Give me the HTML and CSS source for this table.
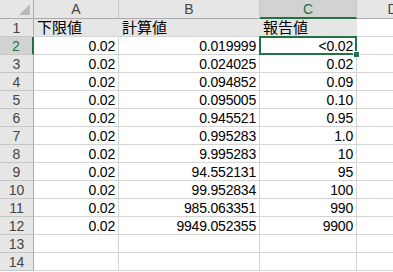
FILE: index.html
```html
<!DOCTYPE html>
<html lang="ja">
<head>
    <meta charset="UTF-8">
    <meta name="viewport" content="width=device-width, initial-scale=1.0">
    <title>報告値の丸め</title>
    <link rel="stylesheet" href="styles.css">
</head>
<body>
    <div class="sheet">
        <!-- 列見出し -->
        <div class="hd corner"></div>
        <div class="hd">A</div>
        <div class="hd">B</div>
        <div class="hd active-col">C</div>
        <div class="hd">D</div>

        <!-- 1行目: 項目名 -->
        <div class="rh">1</div>
        <div class="c band">下限値</div>
        <div class="c band">計算値</div>
        <div class="c band">報告値</div>
        <div class="c"></div>

        <div class="rh active-row">2</div>
        <div class="c num">0.02</div>
        <div class="c num">0.019999</div>
        <div class="c num sel">&lt;0.02</div>
        <div class="c"></div>

        <div class="rh">3</div>
        <div class="c num">0.02</div>
        <div class="c num">0.024025</div>
        <div class="c num">0.02</div>
        <div class="c"></div>

        <div class="rh">4</div>
        <div class="c num">0.02</div>
        <div class="c num">0.094852</div>
        <div class="c num">0.09</div>
        <div class="c"></div>

        <div class="rh">5</div>
        <div class="c num">0.02</div>
        <div class="c num">0.095005</div>
        <div class="c num">0.10</div>
        <div class="c"></div>

        <div class="rh">6</div>
        <div class="c num">0.02</div>
        <div class="c num">0.945521</div>
        <div class="c num">0.95</div>
        <div class="c"></div>

        <div class="rh">7</div>
        <div class="c num">0.02</div>
        <div class="c num">0.995283</div>
        <div class="c num">1.0</div>
        <div class="c"></div>

        <div class="rh">8</div>
        <div class="c num">0.02</div>
        <div class="c num">9.995283</div>
        <div class="c num">10</div>
        <div class="c"></div>

        <div class="rh">9</div>
        <div class="c num">0.02</div>
        <div class="c num">94.552131</div>
        <div class="c num">95</div>
        <div class="c"></div>

        <div class="rh">10</div>
        <div class="c num">0.02</div>
        <div class="c num">99.952834</div>
        <div class="c num">100</div>
        <div class="c"></div>

        <div class="rh">11</div>
        <div class="c num">0.02</div>
        <div class="c num">985.063351</div>
        <div class="c num">990</div>
        <div class="c"></div>

        <div class="rh">12</div>
        <div class="c num">0.02</div>
        <div class="c num">9949.052355</div>
        <div class="c num">9900</div>
        <div class="c"></div>

        <div class="rh">13</div>
        <div class="c"></div>
        <div class="c"></div>
        <div class="c"></div>
        <div class="c"></div>

        <div class="rh">14</div>
        <div class="c"></div>
        <div class="c"></div>
        <div class="c"></div>
        <div class="c"></div>
    </div>
</body>
</html>
```

FILE: styles.css
```css
html, body {
    margin: 0;
    background: #fff;
    overflow: hidden;
}
.sheet {
    display: grid;
    grid-template-columns: 34px 85px 141px 97px 72px;
    grid-template-rows: 19px repeat(14, 18px);
    font-family: "Liberation Sans", "Noto Sans CJK JP", sans-serif;
    font-size: 14px;
    color: #000;
}
.sheet > div {
    box-sizing: border-box;
    display: flex;
    align-items: flex-end;
    line-height: 16px;
    white-space: nowrap;
}

/* 見出し */
.hd {
    background: #e6e6e6;
    color: #444;
    justify-content: center;
    border-right: 1px solid #c6c6c6;
    border-bottom: 1px solid #ababab;
    padding-bottom: 1px;
}
.corner {
    position: relative;
    border-right-color: #ababab;
}
.corner::after {
    content: "";
    position: absolute;
    right: 3px;
    bottom: 3px;
    border-style: solid;
    border-width: 0 0 11px 11px;
    border-color: transparent transparent #b9b9b9 transparent;
}
.active-col {
    background: #d2d2d2;
    color: #217346;
    border-bottom: 2px solid #217346;
    padding-bottom: 0;
}
.rh {
    background: #e6e6e6;
    color: #444;
    justify-content: center;
    border-right: 1px solid #ababab;
    border-bottom: 1px solid #c6c6c6;
}
.active-row {
    background: #d2d2d2;
    color: #217346;
    border-right: 2px solid #217346;
}

/* セル */
.c {
    border-right: 1px solid #d4d4d4;
    border-bottom: 1px solid #d4d4d4;
    padding: 0 3px;
}
.band {
    background: #e7e6e6;
    border-right-color: #e7e6e6;
    font-size: 15px;
    padding-left: 3px;
}
.num {
    justify-content: flex-end;
    letter-spacing: -0.2px;
}
.sel {
    position: relative;
    z-index: 1;
}
.sel::before {
    content: "";
    position: absolute;
    left: -1px;
    top: -1px;
    right: -1px;
    bottom: -1px;
    border: 2px solid #217346;
}
.sel::after {
    content: "";
    position: absolute;
    right: -4px;
    bottom: -4px;
    width: 5px;
    height: 5px;
    background: #217346;
    border: 1px solid #fff;
}
```
